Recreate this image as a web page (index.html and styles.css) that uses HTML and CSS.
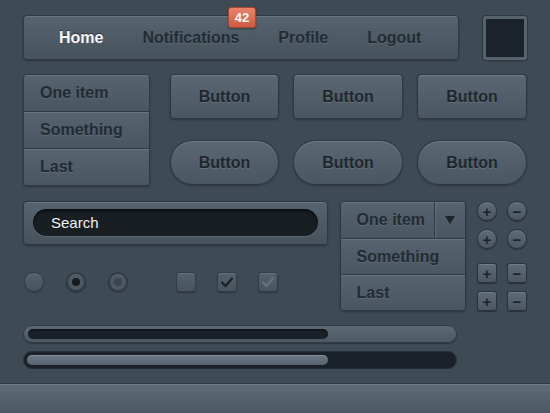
FILE: index.html
```html
<!DOCTYPE html>
<html lang="en">

<head>
  <meta charset="UTF-8" />
  <meta name="viewport" content="width=device-width, initial-scale=1.0" />
  <title>Dark UI Kit</title>
  <link rel="stylesheet" href="styles.css">
</head>

<body>
  <main class="panel">
    <div class="top">
      <nav class="navbar">
        <a class="nav-link active">Home</a>
        <a class="nav-link">Notifications</a>
        <a class="nav-link">Profile</a>
        <a class="nav-link">Logout</a>
        <span class="badge">42</span>
      </nav>
      <div class="swatch"></div>
    </div>

    <div class="row">
      <ul class="list">
        <li>One item</li>
        <li>Something</li>
        <li>Last</li>
      </ul>
      <div class="buttons">
        <button class="btn">Button</button>
        <button class="btn">Button</button>
        <button class="btn">Button</button>
        <button class="btn pill">Button</button>
        <button class="btn pill">Button</button>
        <button class="btn pill">Button</button>
      </div>
    </div>

    <div class="row row-forms">
      <div class="left-col">
        <div class="search-box">
          <div class="search-field">Search</div>
        </div>
        <div class="toggles">
          <div class="radios">
            <span class="radio"></span>
            <span class="radio on"></span>
            <span class="radio on off"></span>
          </div>
          <div class="checks">
            <span class="check"></span>
            <span class="check">
              <svg width="18" height="18" viewBox="0 0 18 18"><path d="M4 9.5 L7.5 13 L14 5.5" fill="none" stroke="#1b2126" stroke-width="2.2" stroke-linecap="round" stroke-linejoin="round"/></svg>
            </span>
            <span class="check">
              <svg width="18" height="18" viewBox="0 0 18 18"><path d="M4 9.5 L7.5 13 L14 5.5" fill="none" stroke="#66737d" stroke-width="2.2" stroke-linecap="round" stroke-linejoin="round"/></svg>
            </span>
          </div>
        </div>
      </div>

      <div class="dropdown">
        <div class="dd-head">
          <span class="dd-label">One item</span>
          <span class="dd-arrow"><span class="caret"></span></span>
        </div>
        <div class="dd-item">Something</div>
        <div class="dd-item">Last</div>
      </div>

      <div class="steppers">
        <div class="step-row">
          <span class="step round">+</span>
          <span class="step round">&minus;</span>
        </div>
        <div class="step-row">
          <span class="step round">+</span>
          <span class="step round">&minus;</span>
        </div>
        <div class="step-row gap-top">
          <span class="step">+</span>
          <span class="step">&minus;</span>
        </div>
        <div class="step-row">
          <span class="step">+</span>
          <span class="step">&minus;</span>
        </div>
      </div>
    </div>

    <div class="progress light">
      <div class="fill" style="width: 300px"></div>
    </div>
    <div class="progress dark">
      <div class="fill" style="width: 301px"></div>
    </div>
  </main>

  <div class="footer-bar"></div>
</body>

</html>
```

FILE: styles.css
```css
body {
  margin: 0;
  width: 550px;
  height: 413px;
  overflow: hidden;
  background: #3e4a54;
  font-family: "Liberation Sans", Arial, sans-serif;
}

.panel {
  padding: 15px 23px 0 23px;
}

/* top nav */
.top {
  display: flex;
  gap: 24px;
}

.navbar {
  position: relative;
  width: 436px;
  height: 45px;
  box-sizing: border-box;
  display: flex;
  align-items: center;
  gap: 39px;
  padding-left: 35px;
  border: 1px solid #2f3941;
  border-radius: 4px;
  background: linear-gradient(#56646f, #46525c);
  box-shadow: inset 0 1px 0 rgba(255, 255, 255, 0.12), 0 1px 2px rgba(0, 0, 0, 0.3);
}

.nav-link {
  font-size: 16px;
  font-weight: bold;
  color: #232c33;
  text-shadow: 0 1px 0 rgba(255, 255, 255, 0.1);
}

.nav-link.active {
  color: #f4f6f7;
  text-shadow: 0 -1px 0 rgba(0, 0, 0, 0.5);
}

.badge {
  position: absolute;
  left: 204px;
  top: -9px;
  width: 28px;
  height: 21px;
  box-sizing: border-box;
  border: 1px solid #a9462f;
  border-radius: 3px;
  background: linear-gradient(#ec8369, #cf5b43);
  color: #fff;
  font-size: 13px;
  font-weight: bold;
  line-height: 19px;
  text-align: center;
  box-shadow: 0 1px 2px rgba(0, 0, 0, 0.35);
}

.swatch {
  width: 44px;
  height: 44px;
  margin-top: 1px;
  box-sizing: border-box;
  border: 3px solid #56626c;
  border-radius: 3px;
  background: #1c2229;
  box-shadow: 0 0 0 1px #2e3840, 0 1px 2px rgba(0, 0, 0, 0.4);
}

/* rows */
.row {
  display: flex;
  gap: 20px;
  margin-top: 14px;
}

.list {
  list-style: none;
  margin: 0;
  padding: 0;
  width: 127px;
  border: 1px solid #2f3941;
  border-radius: 4px;
  overflow: hidden;
  box-shadow: 0 1px 2px rgba(0, 0, 0, 0.3);
}

.list li,
.dd-item,
.dd-head {
  height: 36px;
  box-sizing: border-box;
  display: flex;
  align-items: center;
  padding-left: 16px;
  font-size: 16px;
  font-weight: bold;
  color: #222b32;
  text-shadow: 0 1px 0 rgba(255, 255, 255, 0.1);
  background: linear-gradient(#56646f, #4a5661);
  box-shadow: inset 0 1px 0 rgba(255, 255, 255, 0.12);
}

.list li + li,
.dd-item {
  border-top: 1px solid #2f3941;
  height: 37px;
}

.buttons {
  display: grid;
  grid-template-columns: 109px 110px 110px;
  grid-auto-rows: 45px;
  column-gap: 14px;
  row-gap: 21px;
}

.btn {
  font-family: inherit;
  font-size: 16px;
  font-weight: bold;
  color: #1f272e;
  text-shadow: 0 1px 0 rgba(255, 255, 255, 0.12);
  border: 1px solid #2e3840;
  border-radius: 4px;
  background: linear-gradient(#5a6873, #4a5661);
  box-shadow: inset 0 1px 0 rgba(255, 255, 255, 0.13), 0 1px 2px rgba(0, 0, 0, 0.3);
  padding: 0;
}

.btn.pill {
  border-radius: 23px;
}

/* forms */
.row-forms {
  gap: 11px;
  margin-top: 15px;
}

.left-col {
  width: 306px;
}

.search-box {
  height: 44px;
  box-sizing: border-box;
  padding: 8px 9px;
  border: 1px solid #2f3941;
  border-radius: 4px;
  background: linear-gradient(#56646f, #46525c);
  box-shadow: inset 0 1px 0 rgba(255, 255, 255, 0.12), 0 1px 2px rgba(0, 0, 0, 0.3);
}

.search-field {
  height: 27px;
  margin-top: -1px;
  border-radius: 14px;
  background: #191e23;
  box-shadow: inset 0 2px 3px rgba(0, 0, 0, 0.6), 0 1px 0 rgba(255, 255, 255, 0.12);
  color: #eef1f3;
  font-size: 15px;
  line-height: 27px;
  padding-left: 18px;
}

.toggles {
  display: flex;
  gap: 48px;
  margin-top: 27px;
  padding-left: 1px;
}

.radios {
  display: flex;
  gap: 22px;
}

.checks {
  display: flex;
  gap: 21px;
}

.radio {
  position: relative;
  width: 20px;
  height: 20px;
  box-sizing: border-box;
  border-radius: 50%;
  border: 1px solid #343e46;
  background: linear-gradient(#55626c, #47535d);
  box-shadow: inset 0 1px 0 rgba(255, 255, 255, 0.1), 0 1px 1px rgba(0, 0, 0, 0.3);
}

.radio.on {
  border: 2px solid #323c44;
  background: #4c5862;
}

.radio.on::after {
  content: "";
  position: absolute;
  left: 4px;
  top: 4px;
  width: 8px;
  height: 8px;
  border-radius: 50%;
  background: #161b20;
}

.radio.off::after {
  background: #3a454e;
}

.check {
  width: 20px;
  height: 20px;
  box-sizing: border-box;
  display: flex;
  align-items: center;
  justify-content: center;
  border: 1px solid #333d45;
  border-radius: 3px;
  background: linear-gradient(#55626c, #47535d);
  box-shadow: inset 0 1px 0 rgba(255, 255, 255, 0.1), 0 1px 1px rgba(0, 0, 0, 0.3);
}

/* dropdown */
.dropdown {
  width: 127px;
  height: 110px;
  box-sizing: border-box;
  margin-left: 1px;
  border: 1px solid #2f3941;
  border-radius: 4px;
  overflow: hidden;
  box-shadow: 0 1px 2px rgba(0, 0, 0, 0.3);
}

.dropdown .dd-item {
  height: 36px;
}

.dd-head {
  padding-left: 0;
}

.dd-label {
  flex: 1;
  padding-left: 16px;
}

.dd-arrow {
  width: 30px;
  height: 100%;
  display: flex;
  align-items: center;
  justify-content: center;
  border-left: 1px solid #2f3941;
  box-shadow: inset 1px 0 0 rgba(255, 255, 255, 0.1);
}

.caret {
  width: 0;
  height: 0;
  border-left: 5px solid transparent;
  border-right: 5px solid transparent;
  border-top: 8px solid #1c2329;
}

/* steppers */
.steppers {
  display: flex;
  flex-direction: column;
  gap: 8px;
}

.step-row {
  display: flex;
  gap: 10px;
}

.step-row.gap-top {
  margin-top: 6px;
}

.step {
  width: 20px;
  height: 20px;
  box-sizing: border-box;
  display: flex;
  align-items: center;
  justify-content: center;
  border: 1px solid #2b343c;
  border-radius: 3px;
  background: linear-gradient(#5e6c77, #4a5661);
  box-shadow: inset 0 1px 0 rgba(255, 255, 255, 0.13), 0 1px 1px rgba(0, 0, 0, 0.35);
  color: #1c2329;
  font-size: 15px;
  font-weight: bold;
  line-height: 1;
}

.step.round {
  border-radius: 50%;
}

/* progress */
.progress {
  width: 434px;
  height: 18px;
  box-sizing: border-box;
  border-radius: 9px;
  padding: 3px 4px;
  margin-top: 14px;
}

.progress + .progress {
  margin-top: 8px;
}

.progress.light {
  border: 1px solid #333d46;
  background: linear-gradient(#5d6b76, #4c5863);
  box-shadow: 0 1px 1px rgba(0, 0, 0, 0.3);
}

.progress.light .fill {
  height: 10px;
  border-radius: 5px;
  background: #1a2027;
  box-shadow: inset 0 1px 2px rgba(0, 0, 0, 0.6);
}

.progress.dark {
  border: 1px solid #262e35;
  background: #1b2128;
  padding: 3px 3px;
}

.progress.dark .fill {
  height: 10px;
  border-radius: 5px;
  background: linear-gradient(#6c7a85, #56636e);
  box-shadow: inset 0 1px 0 rgba(255, 255, 255, 0.15);
}

.footer-bar {
  margin-top: 14px;
  height: 31px;
  border-top: 1px solid #2e373f;
  background: linear-gradient(#5f6c77, #4a5661);
  box-shadow: inset 0 1px 0 rgba(255, 255, 255, 0.12);
}
```
